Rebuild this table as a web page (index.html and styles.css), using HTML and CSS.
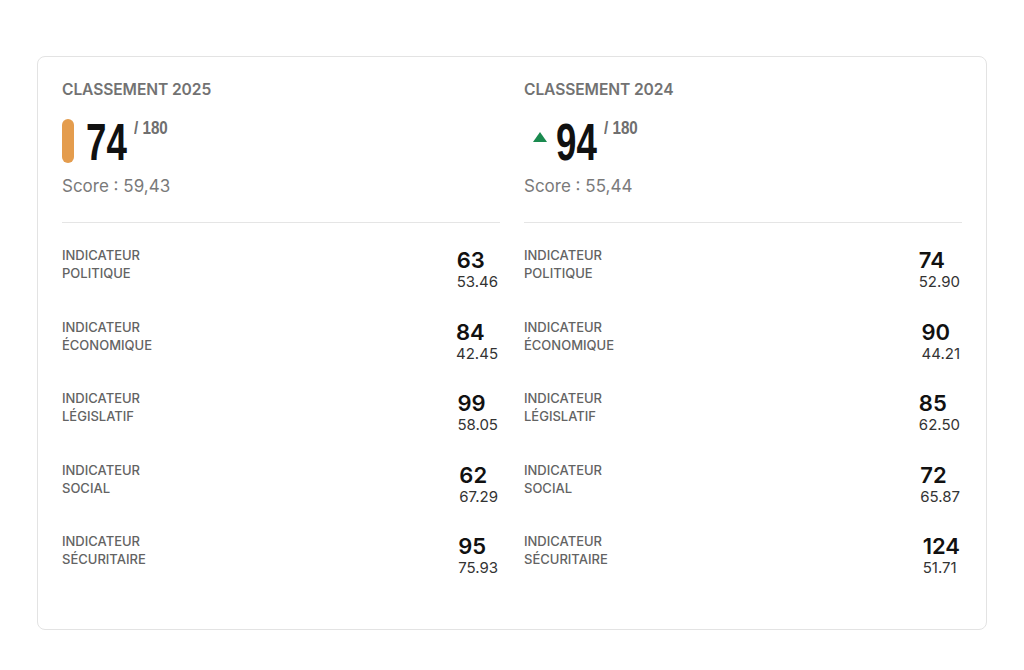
FILE: index.html
```html
<!DOCTYPE html>
<html lang="fr">
<head>
  <meta charset="UTF-8" />
  <title>Classement</title>
  <link rel="stylesheet" href="styles.css">
</head>
<body>
  <div class="card">
    <!-- 2025 -->
    <div class="col">
      <div class="col-title">CLASSEMENT 2025</div>
      <div class="rank">
        <span class="pill"></span>
        <span class="rank-num">74</span>
        <span class="rank-total">/ 180</span>
      </div>
      <div class="score">Score : 59,43</div>
      <div class="divider"></div>

      <div class="row">
        <div class="label">INDICATEUR<br>POLITIQUE</div>
        <div class="vals"><div class="val">63</div><div class="sub">53.46</div></div>
      </div>
      <div class="row">
        <div class="label">INDICATEUR<br>ÉCONOMIQUE</div>
        <div class="vals"><div class="val">84</div><div class="sub">42.45</div></div>
      </div>
      <div class="row">
        <div class="label">INDICATEUR<br>LÉGISLATIF</div>
        <div class="vals"><div class="val">99</div><div class="sub">58.05</div></div>
      </div>
      <div class="row">
        <div class="label">INDICATEUR<br>SOCIAL</div>
        <div class="vals"><div class="val">62</div><div class="sub">67.29</div></div>
      </div>
      <div class="row">
        <div class="label">INDICATEUR<br>SÉCURITAIRE</div>
        <div class="vals"><div class="val">95</div><div class="sub">75.93</div></div>
      </div>
    </div>

    <!-- 2024 -->
    <div class="col">
      <div class="col-title">CLASSEMENT 2024</div>
      <div class="rank">
        <svg class="up" width="16" height="12" viewBox="0 0 16 12"><polygon points="8,1 15,11 1,11" fill="#1a8a4f"/></svg>
        <span class="rank-num">94</span>
        <span class="rank-total">/ 180</span>
      </div>
      <div class="score">Score : 55,44</div>
      <div class="divider"></div>

      <div class="row">
        <div class="label">INDICATEUR<br>POLITIQUE</div>
        <div class="vals"><div class="val">74</div><div class="sub">52.90</div></div>
      </div>
      <div class="row">
        <div class="label">INDICATEUR<br>ÉCONOMIQUE</div>
        <div class="vals"><div class="val">90</div><div class="sub">44.21</div></div>
      </div>
      <div class="row">
        <div class="label">INDICATEUR<br>LÉGISLATIF</div>
        <div class="vals"><div class="val">85</div><div class="sub">62.50</div></div>
      </div>
      <div class="row">
        <div class="label">INDICATEUR<br>SOCIAL</div>
        <div class="vals"><div class="val">72</div><div class="sub">65.87</div></div>
      </div>
      <div class="row">
        <div class="label">INDICATEUR<br>SÉCURITAIRE</div>
        <div class="vals"><div class="val">124</div><div class="sub">51.71</div></div>
      </div>
    </div>
  </div>
</body>
</html>
```

FILE: styles.css
```css
body {
  margin: 0;
  padding: 56px 37px 40px;
  background: #fff;
  font-family: Inter, "Liberation Sans", sans-serif;
  color: #111;
}

.card {
  border: 1px solid #e3e3e3;
  border-radius: 8px;
  padding: 24px 24px 42px;
  display: grid;
  grid-template-columns: 1fr 1fr;
  column-gap: 24px;
  height: 506px;
}

.col-title {
  font-size: 15.6px;
  font-weight: 600;
  color: #727272;
  line-height: 18px;
  letter-spacing: -0.1px;
}

.rank {
  display: flex;
  align-items: flex-start;
  margin-top: 20px;
  height: 44px;
}

.pill {
  width: 12px;
  height: 44px;
  border-radius: 6px;
  background: #e49c4d;
  margin-right: 12px;
}

.up {
  margin: 12px 8px 0 8px;
}

/* condensed look: no narrow font installed, so squeeze Liberation Sans */
.rank-num {
  display: inline-block;
  font-family: "Liberation Sans", Arial, sans-serif;
  font-weight: 700;
  font-size: 51px;
  line-height: 46px;
  color: #111;
  transform: scaleX(0.72);
  transform-origin: left top;
  width: 41px;
  margin-top: 1px;
}

.rank-total {
  display: inline-block;
  font-family: "Liberation Sans", Arial, sans-serif;
  font-weight: 700;
  font-size: 19px;
  color: #6f6f6f;
  line-height: 20px;
  transform: scaleX(0.8);
  transform-origin: left top;
  margin-left: 7px;
  margin-top: -1px;
}

.score {
  font-size: 17px;
  color: #7a7a7a;
  margin-top: 12px;
  line-height: 22px;
}

.divider {
  height: 1px;
  background: #e5e5e5;
  margin-top: 25px;
  margin-bottom: 23px;
}

.row {
  display: flex;
  justify-content: space-between;
  align-items: flex-start;
  height: 71.5px;
}

.label {
  font-size: 13px;
  font-weight: 500;
  color: #636363;
  line-height: 18px;
}

.vals {
  margin-right: 2px;
}

.val {
  font-size: 22px;
  font-weight: 600;
  line-height: 24px;
  color: #111;
  margin-top: 2px;
}

.sub {
  font-size: 15px;
  color: #333;
  line-height: 20px;
}
```
